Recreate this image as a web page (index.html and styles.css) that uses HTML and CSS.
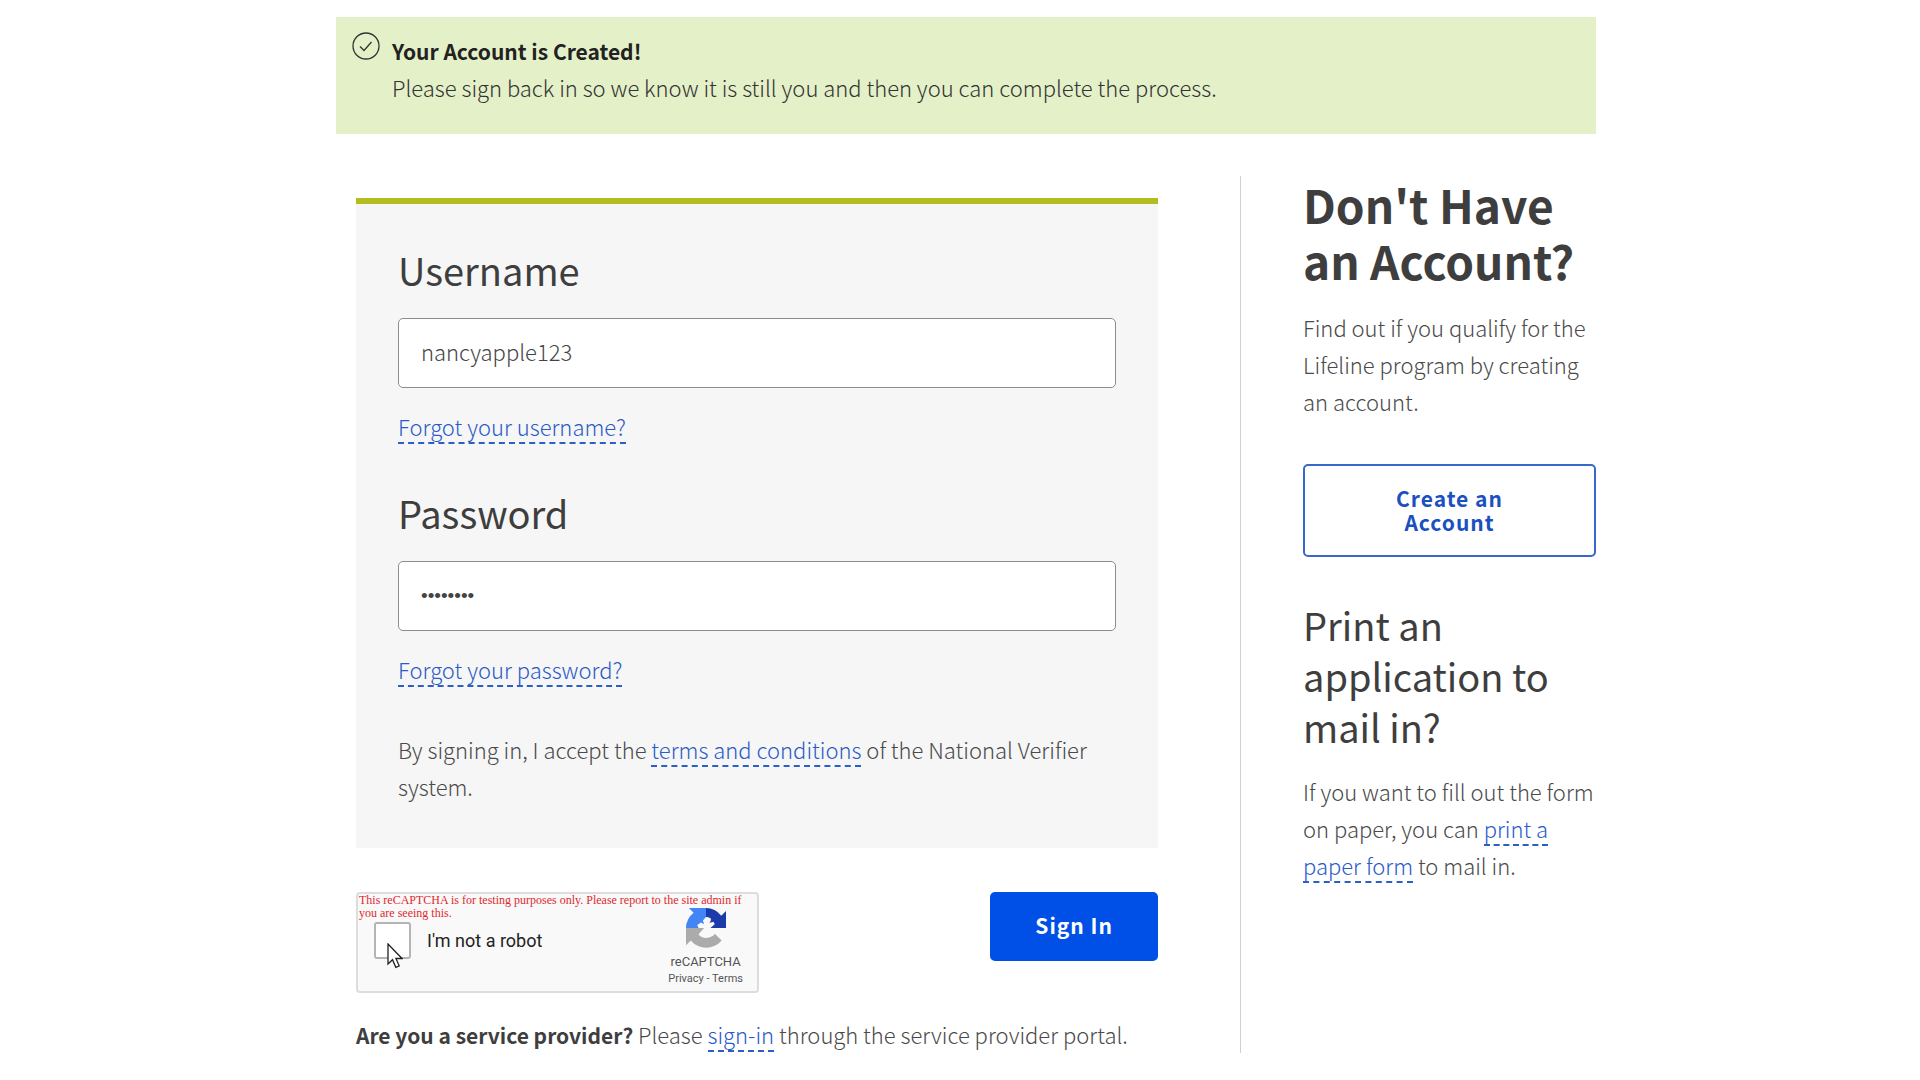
FILE: index.html
```html
<!DOCTYPE html>
<html lang="en">
<head>
    <meta charset="UTF-8">
    <meta name="viewport" content="width=device-width, initial-scale=1.0">
    <title>Sign In</title>
    <link rel="stylesheet" href="styles.css">
</head>
<body>
    <div class="page">
        <div class="alert" role="status">
            <svg class="alert-icon" viewBox="0 0 28 28" fill="none" stroke="currentColor">
                <circle cx="14" cy="14" r="13" stroke-width="1.3"/>
                <path d="M8 14.500l4 4 7.500-8.500" stroke-width="1.3"/>
            </svg>
            <div>
                <strong>Your Account is Created!</strong>
                <p>Please sign back in so we know it is still you and then you can complete the process.</p>
            </div>
        </div>

        <div class="columns">
            <main class="signin">
                <form>
                    <div class="card">
                        <label class="field-label" for="username">Username</label>
                        <input class="field" type="text" id="username" value="nancyapple123">
                        <p class="forgot"><a href="#">Forgot your username?</a></p>

                        <label class="field-label" for="password">Password</label>
                        <input class="field" type="password" id="password" value="apple123">
                        <p class="forgot"><a href="#">Forgot your password?</a></p>

                        <p>By signing in, I accept the <a href="#">terms and conditions</a> of the National Verifier system.</p>
                    </div>

                    <div class="actions">
                        <div class="captcha">
                            <p class="captcha-warning">This reCAPTCHA is for testing purposes only. Please report to the site admin if you are seeing this.</p>
                            <div class="captcha-check">
                                <input type="checkbox" id="robot">
                                <label for="robot">I'm not a robot</label>
                                <svg class="cursor" viewBox="0 0 16 26">
                                    <path d="M1 1v20l4.500-4.300 3.300 7.600 3.400-1.500-3.300-7.300H15z" fill="#fff" stroke="#222" stroke-width="1.300"/>
                                </svg>
                            </div>
                            <div class="captcha-brand">
                                <svg class="captcha-logo" viewBox="0 0 64 64">
                                    <path fill="#1c3aa9" d="M64 32V4.600l-7.600 7.600A32 32 0 0 0 32 0v14.500c3 0 6 1 8 2.500 0 3-1 5-3 7l7-2 2 4-7 6z"/>
                                    <path fill="#4285f4" d="M32 0H4.600l7.600 7.600A32 32 0 0 0 0 32h20l-2-5 6-4 5 3-2-6 5-5.500z"/>
                                    <path fill="#ababab" d="M0 32v27.400l7.600-7.600A32 32 0 0 0 57 51.800L46 41c-1 2-3 3.500-5 4.700-2 1.500-6 2.300-9 2.300-5 0-9-2-12-6l9-10z"/>
                                </svg>
                                <span class="captcha-name">reCAPTCHA</span>
                                <span class="captcha-links"><a href="#">Privacy</a> - <a href="#">Terms</a></span>
                            </div>
                        </div>
                        <button class="btn btn-primary" type="submit">Sign In</button>
                    </div>
                </form>
                <p class="provider"><strong>Are you a service provider?</strong> Please <a href="#">sign-in</a> through the service provider portal.</p>
            </main>

            <aside class="sidebar">
                <h2>Don't Have an Account?</h2>
                <p>Find out if you qualify for the Lifeline program by creating an account.</p>
                <button class="btn btn-outline" type="button">Create an Account</button>
                <h3>Print an application to mail in?</h3>
                <p>If you want to fill out the form on paper, you can <a href="#">print a paper form</a> to mail in.</p>
            </aside>
        </div>
    </div>
</body>
</html>
```
FILE: styles.css
```css
* {
    box-sizing: border-box;
}

body {
    margin: 0;
    background: #fff;
    color: #4a4a4a;
    font-family: "Noto Sans CJK SC", "Noto Sans", sans-serif;
    font-size: 22px;
    font-weight: 300;
    line-height: 37px;
}

p, h2, h3 {
    margin: 0;
}

h2, h3, strong {
    color: #3e3e3e;
}

strong {
    font-size: 21px;
    font-weight: 700;
    line-height: 1;
}

a {
    color: #2a5bc8;
    text-decoration: none;
    border-bottom: 2px dashed #2a5fc8;
}

.page {
    max-width: 1272px;
    margin: 0 auto;
    padding: 17px 0 26px 12px;
}

.alert {
    display: flex;
    gap: 12px;
    padding: 15px 16px 28px;
    background: #e4f0c8;
    color: #333;
}

.alert strong {
    color: #222;
}

.alert-icon {
    flex: none;
    width: 28px;
    height: 28px;
}

.columns {
    display: flex;
    margin-top: 42px;
}

.signin {
    flex: 1;
    padding: 22px 82px 0 20px;
}

.card {
    padding: 41px 42px 43px;
    background: #f6f6f6;
    border-top: 6px solid #b4bd20;
}

.field-label {
    display: block;
    margin-bottom: 23px;
    color: #3e3e3e;
    font-size: 38px;
    font-weight: 400;
    line-height: 50px;
}

.field {
    display: block;
    width: 100%;
    height: 70px;
    padding: 0 22px 4px;
    background: #fff;
    border: 1px solid #8c8c8c;
    border-radius: 5px;
    color: #444;
    font: inherit;
}

.field[type="password"] {
    padding-bottom: 0;
    font-family: "Liberation Sans", sans-serif;
    font-size: 19px;
}

.forgot {
    margin: 20px 0 43px;
}

.actions {
    display: flex;
    justify-content: space-between;
    align-items: flex-start;
    margin-top: 44px;
}

.btn {
    border-radius: 5px;
    font-family: inherit;
    font-size: 21px;
    font-weight: 700;
    letter-spacing: 1px;
    line-height: 24px;
    cursor: pointer;
}

.btn-primary {
    padding: 21px 45px 24px;
    background: #0050e8;
    border: none;
    color: #fff;
}

.btn-outline {
    display: block;
    width: 100%;
    margin: 44px 0 42px;
    padding: 20px 80px 21px;
    background: #fff;
    border: 2px solid #3a68c8;
    color: #1a50c0;
}

.captcha {
    position: relative;
    display: flex;
    justify-content: space-between;
    width: 403px;
    height: 101px;
    padding: 14px 14px 0 16px;
    background: #f9f9f9;
    border: 2px solid #ddd;
    border-radius: 4px;
    font-family: Roboto, sans-serif;
    font-weight: 400;
}

.captcha-warning {
    position: absolute;
    top: 0;
    left: 1px;
    right: 4px;
    color: #e0282e;
    font-family: "Liberation Serif", serif;
    font-size: 12px;
    line-height: 13px;
}

.captcha-check {
    position: relative;
    display: flex;
    align-items: center;
    gap: 16px;
    height: 64px;
    font-size: 18px;
    color: #222;
}

.captcha-check input {
    appearance: none;
    width: 37px;
    height: 37px;
    margin: 0;
    background: #fff;
    border: 2px solid #b4b4b4;
    border-radius: 3px;
}

.cursor {
    position: absolute;
    top: 35px;
    left: 13px;
    width: 16px;
    height: 26px;
}

.captcha-brand {
    display: flex;
    flex-direction: column;
    align-items: center;
    color: #555;
}

.captcha-logo {
    width: 40px;
    height: 40px;
}

.captcha-name {
    margin-top: 5px;
    font-size: 13px;
    line-height: 18px;
}

.captcha-links {
    font-size: 11px;
    line-height: 15px;
}

.captcha-links a {
    color: inherit;
    border: none;
}

.provider {
    margin-top: 23px;
}

.sidebar {
    width: 356px;
    padding-left: 62px;
    border-left: 1px solid #d0d0d0;
}

.sidebar h2 {
    margin-bottom: 21px;
    font-size: 46px;
    font-weight: 700;
    line-height: 56px;
}

.sidebar h3 {
    margin-bottom: 21px;
    font-size: 38px;
    font-weight: 400;
    line-height: 51px;
}
```
